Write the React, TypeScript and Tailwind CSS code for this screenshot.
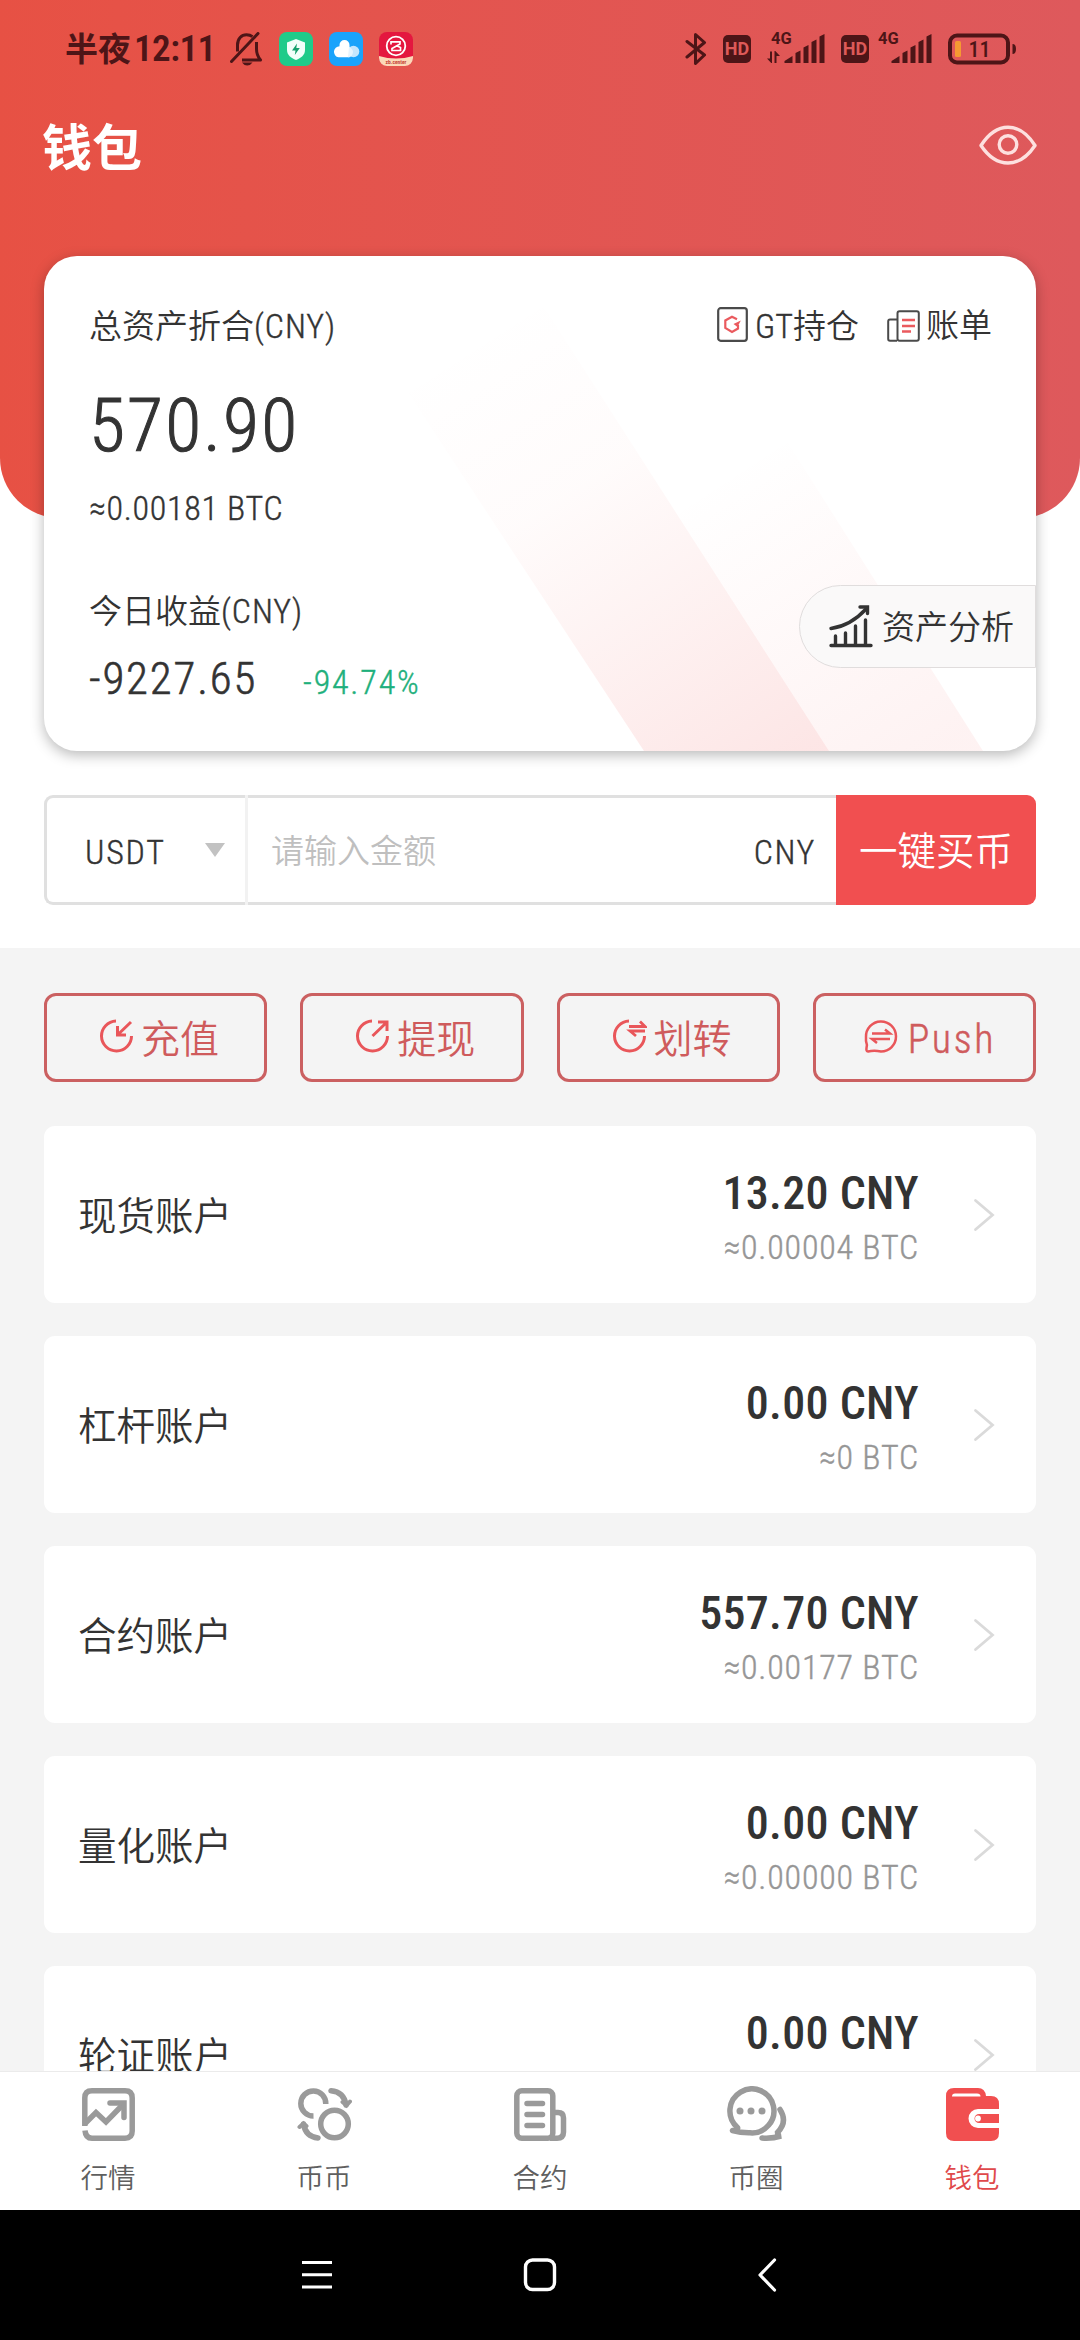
import React from 'react';

type Account = {
  name: string;
  amount: string;
  btc: string;
};

const accounts: Account[] = [
  { name: '现货账户', amount: '13.20', btc: '0.00004' },
  { name: '杠杆账户', amount: '0.00', btc: '0' },
  { name: '合约账户', amount: '557.70', btc: '0.00177' },
  { name: '量化账户', amount: '0.00', btc: '0.00000' },
  { name: '轮证账户', amount: '0.00', btc: '0.00000' },
];

const BellOffIcon = () => (
  <svg width="33" height="34" viewBox="0 0 33 34" fill="none" stroke="currentColor" strokeWidth="3">
    <path d="M1.5 29.5 L28 1.5" strokeLinecap="round" />
    <path d="M7.5 19.5 V13 C7.5 6.5 11.5 2.7 16.5 2.7 C19 2.7 21 3.4 22.5 4.6" />
    <path d="M26.5 10 V17 C26.5 21 28 25 30.5 28 H12" strokeLinejoin="round" />
    <path d="M12 30.5 H22.5 Q20.5 33.5 17.2 33.5 Q14 33.5 12 30.5Z" fill="currentColor" stroke="none" />
  </svg>
);

const ShieldApp = () => (
  <svg width="34" height="34" viewBox="0 0 34 34">
    <rect width="34" height="34" rx="8" fill="#1fcb8a" />
    <path d="M17 7 L26 10.5 V18 C26 23 22 26 17 28 C12 26 8 23 8 18 V10.5Z" fill="#f2fffa" />
    <path d="M18 11.5 L13 18.5 H16.5 L15.8 23 L20.8 16 H17.3Z" fill="#15a06c" />
  </svg>
);

const CloudApp = () => (
  <svg width="34" height="34" viewBox="0 0 34 34">
    <rect width="34" height="34" rx="8" fill="#1aa3fb" />
    <circle cx="24.5" cy="19.5" r="5.8" fill="#c5e6fd" />
    <path d="M9.5 25.3 A5.6 5.6 0 0 1 10.5 14.2 V13 A5 5 0 0 1 20.5 13 V25.3Z" fill="#fff" />
    <path d="M20 14.8 Q24 17 24 20 Q23.5 25.3 19 25.3Z" fill="#e6f4fe" />
  </svg>
);

const ZbApp = () => (
  <svg width="34" height="34" viewBox="0 0 34 34">
    <rect width="34" height="34" rx="8" fill="#e4173f" />
    <path d="M0 24 Q17 29 34 24 V26 A8 8 0 0 1 26 34 H8 A8 8 0 0 1 0 26Z" fill="#fbd9b8" />
    <circle cx="17" cy="14" r="9.3" fill="none" stroke="#fff" strokeWidth="1.8" />
    <path d="M12 12.5 V9.8 H21 V12 L13 16.5 V18.5 H21.5 V15.5 L17.5 13.8" fill="none" stroke="#fff" strokeWidth="1.7" />
    <text x="17" y="31.5" textAnchor="middle" fontSize="5.5" fontWeight="700" fill="#c8483c">
      zb.center
    </text>
  </svg>
);

const BluetoothIcon = () => (
  <svg width="22" height="34" viewBox="0 0 22 34" fill="none" stroke="currentColor" strokeWidth="3" strokeLinejoin="round" strokeLinecap="round">
    <path d="M2 9.5 L19.5 23 L10.5 31.5 V2.5 L19.5 10.5 L2 25" />
  </svg>
);

const HdBadge = () => (
  <span className="flex h-7 w-7 items-center justify-center rounded-[5px] bg-[#4d1517] font-[Roboto] text-[18px] leading-none font-bold text-[#dd5a58]">
    HD
  </span>
);

const Signal = ({ data = false }: { data?: boolean }) => (
  <svg width="58" height="46" viewBox="0 -6 58 46" fill="currentColor">
    <text x="4" y="12.2" fontSize="16.5" fontWeight="700" fontFamily="Roboto">
      4G
    </text>
    {data && <path d="M0 26.5 H3 V19.5 H5 V31 H4.2Z M7.5 31 V19 H8.3 L13 24 H9.5 V31Z" />}
    <path d="M17.5 31 V29 L25.5 24 V31Z M28.5 31 V21 L33.5 18.5 V31Z M36.5 31 V15.5 L41.5 13 V31Z M44.5 31 V10 L49.5 7.5 V31Z M52.5 31 V4.5 L57.5 2 V31Z" />
  </svg>
);

const Battery = () => (
  <svg width="68" height="34" viewBox="0 0 68 34" fill="none">
    <rect x="2" y="3.5" width="58" height="27" rx="7" stroke="currentColor" strokeWidth="4" />
    <path d="M64.5 12 Q68 12 68 17 Q68 22 64.5 22Z" fill="currentColor" />
    <rect x="7" y="9" width="6" height="16" rx="1.5" fill="#f59a32" />
    <text x="31.5" y="25" textAnchor="middle" fontSize="22" fontWeight="500" fill="currentColor">
      11
    </text>
  </svg>
);

const StatusBar = () => (
  <div className="flex h-[98px] items-center justify-between pr-16 pl-[65px] text-[#4d1517]">
    <div className="flex items-center">
      <span className="w-[165px] text-[33px] leading-[44px] font-bold whitespace-nowrap">
        半夜<span className="ml-[3px] text-[37px] font-semibold tracking-[-0.5px]">12:11</span>
      </span>
      <div className="flex items-center gap-4">
        <BellOffIcon />
        <ShieldApp />
        <CloudApp />
        <ZbApp />
      </div>
    </div>
    <div className="flex items-center gap-4">
      <BluetoothIcon />
      <HdBadge />
      <Signal data />
      <div className="flex items-center gap-[5px]">
        <HdBadge />
        <Signal />
      </div>
      <Battery />
    </div>
  </div>
);

const EyeIcon = () => (
  <svg width="58" height="40" viewBox="0 0 58 40" fill="none" stroke="#fde0df" strokeWidth="3.4">
    <path d="M2 20.5 C10 8 19 2.2 29 2.2 C39 2.2 48 8 56 20.5 C48 32.5 39 38 29 38 C19 38 10 32.5 2 20.5Z" strokeLinejoin="round" />
    <circle cx="29" cy="19.5" r="8.800" />
  </svg>
);

const GtIcon = () => (
  <svg width="31" height="35" viewBox="0 0 31 35" fill="none">
    <rect x="1.2" y="1.2" width="28.6" height="32.6" rx="2.5" stroke="#4a4a4a" strokeWidth="2.2" />
    <path d="M20 12.3 L15 9.8 L8.3 13.5 V21 L15 25 L21 21.5 V18" stroke="#ea5a5e" strokeWidth="2.2" />
    <path d="M23.8 13.5 L16.5 17 L20.5 20Z" fill="#ea5a5e" />
  </svg>
);

const BillIcon = () => (
  <svg width="33" height="32" viewBox="0 0 33 32" fill="none" stroke="#4a4a4a" strokeWidth="2">
    <path d="M10 9.5 H3 Q1.2 9.5 1.2 11.5 V29 Q1.2 30.8 3 30.8 H10" />
    <rect x="10.5" y="1.2" width="21.3" height="29.6" rx="2" />
    <path d="M15 10 H28 M15 16 H28 M15 21.5 H24" stroke="#ea5a5e" strokeWidth="2.3" />
  </svg>
);

const ChartIcon = () => (
  <svg width="44" height="44" viewBox="0 0 44 44" fill="none" stroke="#333" strokeWidth="3.4" strokeLinecap="round">
    <path d="M2 40.5 H42 M6.5 31 V40 M16.5 28 V40 M26.5 21 V40 M36.5 15 V40" />
    <path d="M2 23.5 Q22 20.5 37 4" />
    <path d="M31 2 H38.5 V8.5" />
  </svg>
);

const CardStripes = () => (
  <svg className="absolute inset-0" width="992" height="495" viewBox="0 0 992 495">
    <defs>
      <linearGradient id="stripeA" gradientUnits="userSpaceOnUse" x1="420" y1="80" x2="710" y2="530">
        <stop offset="0" stopColor="#ef4444" stopOpacity="0" />
        <stop offset="0.35" stopColor="#ef4a44" stopOpacity="0.02" />
        <stop offset="1" stopColor="#ef4a4a" stopOpacity="0.14" />
      </linearGradient>
      <linearGradient id="stripeB" gradientUnits="userSpaceOnUse" x1="690" y1="210" x2="880" y2="500">
        <stop offset="0" stopColor="#ef4444" stopOpacity="0" />
        <stop offset="1" stopColor="#ef4a4a" stopOpacity="0.07" />
      </linearGradient>
    </defs>
    <path d="M340 100 L480 20 L785 495 H600Z" fill="url(#stripeA)" />
    <path d="M628 250 L730 165 L939 495 H785Z" fill="url(#stripeB)" />
  </svg>
);

const AssetCard = () => (
  <section className="relative mx-11 -mt-[262px] h-[495px] rounded-[33px] bg-white shadow-[0_4px_14px_rgba(0,0,0,0.28)]">
    <div className="absolute inset-0 overflow-hidden rounded-[33px]">
      <CardStripes />
    </div>
    <div className="relative flex flex-col pt-[50px] pr-[44px] pl-[45px]">
      <div className="flex h-10 items-center justify-between text-[33px] leading-10">
        <span>
          总资产折合<span className="text-[34px] tracking-[0.9px] [-webkit-text-stroke:0.4px]">(CNY)</span>
        </span>
        <div className="flex items-center">
          <span className="mb-1">
            <GtIcon />
          </span>
          <span className="ml-[7px]">
            <span className="text-[34px] [-webkit-text-stroke:0.4px]">GT</span>持仓
          </span>
          <span className="ml-[28px]">
            <BillIcon />
          </span>
          <span className="ml-[6px]">账单</span>
        </div>
      </div>
      <div className="mt-[43px] text-[74px] leading-[74px] tracking-[2.1px] [-webkit-text-stroke:1px]">570.90</div>
      <div className="mt-[25px] text-[34px] leading-10 tracking-[0.7px] [-webkit-text-stroke:0.4px]">≈0.00181 BTC</div>
      <div className="mt-[63px] text-[33px] leading-10">
        今日收益<span className="text-[34px] tracking-[0.9px] [-webkit-text-stroke:0.4px]">(CNY)</span>
      </div>
      <div className="mt-[22px] flex items-baseline leading-[50px]">
        <span className="text-[45px] tracking-[1.8px] [-webkit-text-stroke:0.6px]">-9227.65</span>
        <span className="ml-[46px] text-[34px] tracking-[1.8px] text-[#1eb07c] [-webkit-text-stroke:0.4px]">-94.74%</span>
      </div>
    </div>
    <button className="absolute top-[329px] right-0 flex h-[83px] w-[237px] items-center rounded-l-full border border-[#e0dddd] bg-[#faf9f9] pl-[29px] text-[33px]">
      <ChartIcon />
      <span className="mt-[3px] ml-[9px] leading-10">资产分析</span>
    </button>
  </section>
);

const BuyRow = () => (
  <div className="mx-11 mt-11 mb-[43px] flex h-[110px] text-[33px]">
    <div className="flex w-[201px] items-center justify-between rounded-l-[9px] border-[3px] border-r-0 border-[#e0e0e0] pr-[20px] pl-[38px]">
      <span className="pt-[4px] text-[34px] tracking-[1.8px] [-webkit-text-stroke:0.4px]">USDT</span>
      <svg width="20" height="14" viewBox="0 0 20 14">
        <path d="M0 0 H20 L10 14Z" fill="#c2c2c2" />
      </svg>
    </div>
    <div className="w-[3px] bg-[#f2f2f2]" />
    <div className="flex flex-1 items-center justify-between border-y-[3px] border-[#e0e0e0] pt-[4px] pr-[20px] pl-[23px]">
      <span className="text-[#bfbfbf]">请输入金额</span>
      <span className="text-[34px] tracking-[1.6px] [-webkit-text-stroke:0.4px]">CNY</span>
    </div>
    <button className="w-[200px] rounded-r-[9px] bg-[#f14f50] pt-[4px] text-[38.5px] text-white">一键买币</button>
  </div>
);

const DepositIcon = () => (
  <>
    <path d="M16 2 A15 15 0 1 0 31.5 17" />
    <path d="M31 3 L18 15.5 M17.5 7 V16 H26" />
  </>
);

const WithdrawIcon = () => (
  <>
    <path d="M16 2 A15 15 0 1 0 31.5 17" />
    <path d="M16.5 17 L30 4 M22 3 H31 V12" />
  </>
);

const TransferIcon = () => (
  <>
    <path d="M16 2 A15 15 0 1 0 31.5 17" />
    <path d="M16 7.5 H32 L27 2.5 M32 12 H17 L23 17" strokeWidth="2.8" />
  </>
);

const PushIcon = () => (
  <>
    <path d="M2 18 A15 15 0 1 1 17 32.5 Q10 31 4 32.5 Q2 32.5 2.5 29 Q3.5 26 2 22Z" strokeWidth="2.5" />
    <path d="M8 14.5 H26 L21 10.5 M26 20 H8 L13 24" strokeWidth="2.5" />
  </>
);

const actions = [
  { label: '充值', Icon: DepositIcon },
  { label: '提现', Icon: WithdrawIcon },
  { label: '划转', Icon: TransferIcon },
  { label: 'Push', Icon: PushIcon },
];

const ActionButtons = () => (
  <div className="grid grid-cols-4 gap-[33px]">
    {actions.map(({ label, Icon }) => (
      <button
        key={label}
        className="flex h-[89px] items-center justify-center rounded-[12px] border-[3px] border-[#cb6061] pl-2 text-[39px] text-[#cf5b5c]"
      >
        <svg className="mb-[4px]" width="34" height="34" viewBox="0 0 34 34" fill="none" stroke="#e9565a" strokeWidth="3">
          <Icon />
        </svg>
        <span
          className={
            label === 'Push'
              ? 'mt-[5px] -mr-[3px] ml-[10px] text-[40px] tracking-[2.6px] [-webkit-text-stroke:0.5px]'
              : 'mt-[5px] ml-[7px]'
          }
        >
          {label}
        </span>
      </button>
    ))}
  </div>
);

const AccountRow = ({ account }: { account: Account }) => (
  <div className="flex h-[177px] shrink-0 items-center rounded-[11px] bg-white pr-[41px] pl-[34px]">
    <span className="flex-1 pt-[5px] text-[38.5px]">{account.name}</span>
    <div className="flex flex-col items-end pt-[4px]">
      <span className="text-[46px] leading-[54px] font-medium tracking-[0.3px]">{account.amount} CNY</span>
      <span className="mt-[7px] text-[34px] leading-10 tracking-[0.8px] text-[#969696] [-webkit-text-stroke:0.4px]">
        ≈{account.btc} BTC
      </span>
    </div>
    <svg className="ml-[54px]" width="22" height="34" viewBox="0 0 22 34" fill="none" stroke="#dadada" strokeWidth="2.8" strokeLinecap="round">
      <path d="M2.5 2.5 L19.5 17 L2.5 31.5" />
    </svg>
  </div>
);

const MarketIcon = () => (
  <svg width="53" height="53" viewBox="0 0 53 53" fill="none" stroke="currentColor" strokeWidth="5.5">
    <path d="M2.8 38 V10 Q2.8 2.8 10 2.8 H43 Q50.2 2.8 50.2 10 V43 Q50.2 50.2 43 50.2 H10 Q3.5 50.2 3 42.5" />
    <path d="M2.5 36 L14 24.5 L24 34 L41 16.5" />
    <path d="M28 15 H42 V29.5" strokeLinecap="round" />
  </svg>
);

const CoinIcon = () => (
  <svg width="55" height="53" viewBox="0 0 55 53" fill="none" stroke="currentColor" strokeWidth="5.5">
    <circle cx="37.5" cy="36" r="13.8" />
    <path d="M28.8 16 A12.5 12.5 0 1 0 16.5 28" />
    <path d="M34 2.8 Q47 4 49 17" strokeLinecap="round" />
    <path d="M45.5 14 L49.5 17.5 L53 13.5" strokeWidth="4" strokeLinecap="round" />
    <path d="M6.5 36 Q8.5 48.5 21 50" strokeLinecap="round" />
    <path d="M2.5 39 L6.5 35.5 L9.5 38" strokeWidth="4" strokeLinecap="round" />
  </svg>
);

const ContractIcon = () => (
  <svg width="53" height="53" viewBox="0 0 53 53" fill="none" stroke="currentColor" strokeWidth="5.5">
    <rect x="2.8" y="2.8" width="36" height="47.4" rx="5" />
    <path d="M13 15.5 H28.5 M13 26.5 H28.5 M13 37.5 H28.5" strokeLinecap="round" />
    <path d="M38.5 24.5 H44 Q49.5 24.5 49.5 30 V44 Q49.5 50.2 43 50.2 H36" />
  </svg>
);

const CommunityIcon = () => (
  <svg width="61" height="56" viewBox="0 0 61 56" fill="none" stroke="currentColor" strokeWidth="5.5" strokeLinecap="round">
    <path d="M11.5 41.5 A22 22 0 1 1 24 46.8 Q15 47 6.5 44.5 Q12.5 43.5 11.5 41.5Z" strokeLinejoin="round" />
    <path d="M54 23.5 Q62 36 51.5 46.5 Q51.5 50 55 50 Q46 52.8 36 52" />
    <g fill="currentColor" stroke="none">
      <circle cx="14" cy="25" r="3.5" />
      <circle cx="25" cy="25" r="3.5" />
      <circle cx="36" cy="25" r="3.5" />
    </g>
  </svg>
);

const WalletIcon = () => (
  <svg width="53" height="53" viewBox="0 0 53 53" fill="currentColor">
    <path d="M0 8 Q0 0 8 0 H32 Q39 0 40 8 H45 Q53 8 53 16 V45 Q53 53 45 53 H8 Q0 53 0 45Z" />
    <path d="M6 8.5 Q6 5.5 9 5.5 H31 Q34.5 5.5 34.5 8.5Z" fill="#fff" />
    <path d="M53 21 H32 A9.5 9.5 0 0 0 32 40 H53 V35 H33 A4.5 4.5 0 0 1 33 26 H53Z" fill="#fff" />
    <circle cx="32" cy="30.5" r="2.9" fill="#fff" />
  </svg>
);

const tabs = [
  { label: '行情', Icon: MarketIcon },
  { label: '币币', Icon: CoinIcon },
  { label: '合约', Icon: ContractIcon },
  { label: '币圈', Icon: CommunityIcon },
  { label: '钱包', Icon: WalletIcon, active: true },
];

const TabBar = () => (
  <nav className="grid h-[139px] grid-cols-5 border-t border-[#ebebeb] bg-white">
    {tabs.map(({ label, Icon, active }) => (
      <div key={label} className={`flex flex-col items-center pt-[13px] ${active ? 'text-[#f14f50]' : 'text-[#9a9a9a]'}`}>
        <div className="flex h-[58px] items-center">
          <Icon />
        </div>
        <span className={`mt-[18px] text-[27.5px] leading-9 ${active ? 'text-[#e0494b]' : 'text-[#5f5f5f]'}`}>{label}</span>
      </div>
    ))}
  </nav>
);

const SystemNav = () => (
  <div className="flex h-[130px] items-center bg-black pl-[301px]">
    <svg width="32" height="34" viewBox="0 0 32 34" stroke="#fff" strokeWidth="3">
      <path d="M1 4.5 H31 M1 16.8 H31 M1 29 H31" />
    </svg>
    <svg className="ml-[190px]" width="34" height="34" viewBox="0 0 34 34" fill="none" stroke="#fff" strokeWidth="3.4">
      <rect x="2.5" y="2" width="29" height="29.5" rx="7" />
    </svg>
    <svg className="ml-[200px]" width="20" height="34" viewBox="0 0 20 34" fill="none" stroke="#fff" strokeWidth="3.2" strokeLinecap="round" strokeLinejoin="round">
      <path d="M17.5 2 L3 17 L17.5 32" />
    </svg>
  </div>
);

export default function App() {
  return (
    <div className="flex h-[2340px] w-[1080px] flex-col overflow-hidden bg-white font-['Roboto_Condensed','Noto_Sans_CJK_SC',sans-serif] font-[350] text-[#333]">
      <header className="h-[518px] shrink-0 rounded-b-[60px] bg-linear-to-r from-[#e75144] to-[#de595c]">
        <StatusBar />
        <div className="flex h-[98px] items-center justify-between pr-[43px] pl-[42px]">
          <h1 className="mt-[4px] text-[50px] leading-[60px] font-bold text-white">钱包</h1>
          <span className="mb-[4px]">
            <EyeIcon />
          </span>
        </div>
      </header>

      <AssetCard />
      <BuyRow />

      <main className="flex min-h-0 flex-1 flex-col overflow-hidden bg-[#f4f4f4] px-11 pt-[45px]">
        <ActionButtons />
        <div className="mt-11 flex flex-col gap-[33px]">
          {accounts.map((account) => (
            <AccountRow key={account.name} account={account} />
          ))}
        </div>
      </main>

      <TabBar />
      <SystemNav />
    </div>
  );
}
